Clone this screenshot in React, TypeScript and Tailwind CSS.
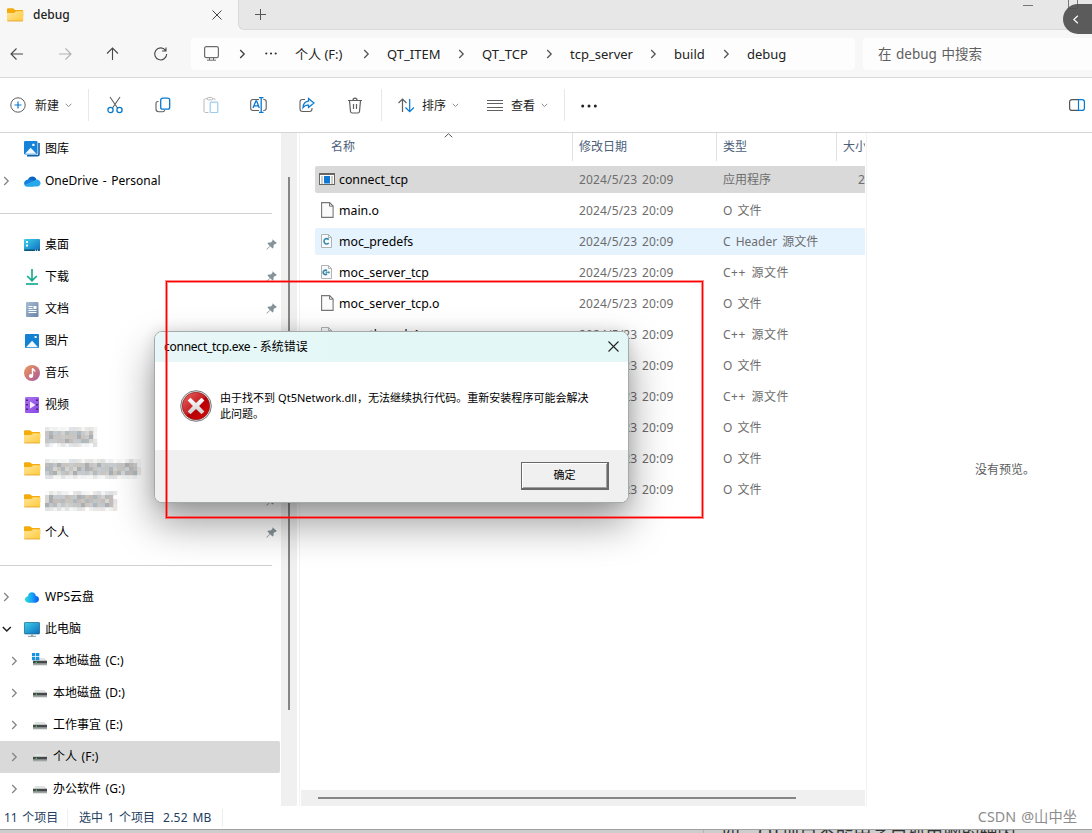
import type { ReactNode } from "react";

interface SideItem {
  label?: string;
  icon: ReactNode;
  chevron?: "right" | "down";
  pinned?: boolean;
  nested?: boolean;
  selected?: boolean;
  mosaic?: number;
}

interface FileItem {
  name: string;
  kind: "exe" | "file" | "c" | "cpp";
  type: string;
  size?: string;
}

const files: FileItem[] = [
  { name: "connect_tcp", kind: "exe", type: "应用程序", size: "2" },
  { name: "main.o", kind: "file", type: "O 文件" },
  { name: "moc_predefs", kind: "c", type: "C Header 源文件" },
  { name: "moc_server_tcp", kind: "cpp", type: "C++ 源文件" },
  { name: "moc_server_tcp.o", kind: "file", type: "O 文件" },
  { name: "moc_thread_1", kind: "cpp", type: "C++ 源文件" },
  { name: "moc_thread_1.o", kind: "file", type: "O 文件" },
  { name: "qrc_resource", kind: "cpp", type: "C++ 源文件" },
  { name: "qrc_resource.o", kind: "file", type: "O 文件" },
  { name: "server_tcp.o", kind: "file", type: "O 文件" },
  { name: "thread_1.o", kind: "file", type: "O 文件" },
];

function Chevron({ className = "" }: { className?: string }) {
  return (
    <svg width="7" height="10" viewBox="0 0 7 10" fill="none" stroke="currentColor" strokeWidth="1.3" className={className}>
      <path d="M1.2 1 5.2 5 1.2 9" />
    </svg>
  );
}

function SmallDown() {
  return (
    <svg width="7" height="5" viewBox="0 0 7 5" fill="none" stroke="#8a8a8a">
      <path d="M.7.8 3.5 3.6 6.3.8" />
    </svg>
  );
}

function Folder() {
  return (
    <svg width="17" height="14" viewBox="0 0 17 14">
      <defs>
        <linearGradient id="folder" x1="0" y1="0" x2="1" y2="1">
          <stop offset="0" stopColor="#ffe59a" />
          <stop offset="1" stopColor="#ffcb3d" />
        </linearGradient>
      </defs>
      <path d="M0 1.6C0 .8.6.3 1.300.3h4.400c.5 0 .8.2 1.100.5L8 2h7c.7 0 1.200.5 1.200 1.200V8H0z" fill="#f3ac0c" />
      <path d="M0 4.900h6.600c.5 0 .8-.2 1.200-.5L9 3.200h6c.7 0 1.200.4 1.200 1.100v7.800c0 .7-.5 1.200-1.200 1.200H1.200C.5 13.300 0 12.800 0 12.100z" fill="url(#folder)" />
      <path d="M.3 12.900h15.600" stroke="#e9a83a" strokeWidth=".9" />
    </svg>
  );
}

function Gallery() {
  return (
    <svg width="16" height="16" viewBox="0 0 16 16">
      <path d="M3 14.800h10.300c1 0 1.700-.7 1.700-1.700V2" fill="none" stroke="#0f5fa8" strokeWidth="1.600" />
      <rect width="13.500" height="13.500" rx="1.300" fill="#1583d8" />
      <path d="m1 12.700 5.600-6 5.900 6z" fill="#f3f9ff" />
      <rect x="8.300" y="2.800" width="2.200" height="2.200" fill="#fff" />
    </svg>
  );
}

function OneDrive() {
  return (
    <svg width="17" height="11" viewBox="0 0 17 11">
      <path d="M4 3.600C5.500-.7 11.400-.6 12.500 3.700L8 7z" fill="#0b64c0" />
      <path d="M4 3.500c-5 .6-5.200 6.600-.7 7h6L10 5C8 3.500 6 3.200 4 3.500z" fill="#1480da" />
      <path d="M12.500 3.600c4.900 0 5.400 6.500 1 6.900H3.300C2 10.500 1 9.800.5 8.900z" fill="#28a8ea" />
    </svg>
  );
}

function Desktop() {
  return (
    <svg width="16" height="12" viewBox="0 0 16 12">
      <defs>
        <linearGradient id="desk" x1="0" y1="0" x2="1" y2="1">
          <stop offset="0" stopColor="#3cd0e8" />
          <stop offset="1" stopColor="#0f6cc0" />
        </linearGradient>
      </defs>
      <rect width="16" height="12" rx="1" fill="url(#desk)" />
      <path d="M0 10.500h16V11l-1 1H1l-1-1z" fill="#0b5577" />
      <path d="M2 2h2v2H2zM2 5.500h2v2H2zM11 10.700h1v1h-1zM13 10.700h1v1h-1z" fill="#e9faff" />
    </svg>
  );
}

function Download() {
  return (
    <svg width="14" height="16" viewBox="0 0 14 16" fill="none" stroke="#19aa91" strokeWidth="1.700">
      <path d="M7 0v11.500M2.200 7 7 11.700 11.800 7" />
      <path d="M1 15h12" />
    </svg>
  );
}

function Document() {
  return (
    <svg width="13" height="15" viewBox="0 0 13 15">
      <defs>
        <linearGradient id="doc" x1="0" y1="0" x2="1" y2="1">
          <stop offset="0" stopColor="#a9bfd6" />
          <stop offset="1" stopColor="#6883a5" />
        </linearGradient>
      </defs>
      <rect width="12.500" height="15" rx="1" fill="url(#doc)" />
      <path d="M2.500 4.500h4M2.500 6.500h4M2.500 8.500h8M2.500 10.500h8" stroke="#fff" />
      <path d="M7.500 4h3v3h-3z" fill="#fff" />
    </svg>
  );
}

function Picture() {
  return (
    <svg width="14" height="14" viewBox="0 0 14 14">
      <rect width="14" height="14" rx="1" fill="#1482d2" />
      <path d="m1 13.300 6.100-6.600 5.900 6.600z" fill="#f3f9ff" />
      <rect x="9.600" y="2" width="2" height="2" fill="#fff" />
    </svg>
  );
}

function Music() {
  return (
    <svg width="16" height="16" viewBox="0 0 16 16">
      <defs>
        <linearGradient id="music" x1="0" y1="0" x2="1" y2="1">
          <stop offset="0" stopColor="#f09a55" />
          <stop offset="1" stopColor="#a655a0" />
        </linearGradient>
      </defs>
      <circle cx="8" cy="8" r="8" fill="url(#music)" />
      <ellipse cx="7" cy="11" rx="2.200" ry="2" fill="#fff" />
      <path d="M8.500 11V3.300c.4 1.500 2.400 1.500 2.400 3.200" fill="none" stroke="#fff" strokeWidth="1.400" />
    </svg>
  );
}

function Video() {
  return (
    <svg width="14" height="16" viewBox="0 0 14 16">
      <defs>
        <linearGradient id="video" x1="0" y1="0" x2="1" y2="1">
          <stop offset="0" stopColor="#a873ee" />
          <stop offset="1" stopColor="#8a48e4" />
        </linearGradient>
      </defs>
      <rect width="14" height="16" rx="1" fill="url(#video)" />
      <path d="M2 2.500v12M12 2.500v12" stroke="#3b1c6e" strokeWidth="1.700" strokeDasharray="1.600 2.900" />
      <path d="m5 4.500 5.500 3.500L5 11.500z" fill="#f5edff" />
    </svg>
  );
}

function WpsCloud() {
  return (
    <svg width="14" height="11" viewBox="0 0 14 11">
      <defs>
        <linearGradient id="wps" x1="0" y1="0" x2="1" y2="0">
          <stop offset="0" stopColor="#2be0c8" />
          <stop offset=".5" stopColor="#17a2fb" />
          <stop offset="1" stopColor="#0b54e8" />
        </linearGradient>
      </defs>
      <path d="M3 4.200C3-1 10.500-1 10.800 4c4.300.3 4.100 6.500-.2 6.700H3.700C-.8 10.700-1.400 4.900 3 4.200z" fill="url(#wps)" />
    </svg>
  );
}

function Computer() {
  return (
    <svg width="16" height="15" viewBox="0 0 16 15">
      <rect x=".4" y=".4" width="15.200" height="11.500" rx=".8" fill="url(#desk)" stroke="#176a8e" strokeWidth=".8" />
      <path d="M7 12.200h2v2H7z" fill="#9aa9b5" />
      <path d="M4 14.300h8" stroke="#8495a3" />
    </svg>
  );
}

function Drive({ system = false }: { system?: boolean }) {
  return (
    <svg width="16" height="16" viewBox="0 0 16 16">
      <path d="M3.500 5h9L15 8H1z" fill="#e0e2e4" />
      <rect x="1" y="7.800" width="14" height="2.900" fill="#444849" />
      <path d="M1 10.600h14v1.700H1z" fill="#a2a5a6" />
      <path d="M3.700 8.700h1.200v1.200H3.700z" fill="#24f04f" />
      {system && <path d="M0 0h3.300v3.300H0zM4 0h3.300v3.300H4zM0 4h3.300v3.300H0zM4 4h3.300v3.300H4z" fill="#1592df" />}
    </svg>
  );
}

function Pin() {
  return (
    <svg width="11" height="11" viewBox="0 0 11 11" className="mb-0.5 text-[#87939b]">
      <path d="M6.500.2 10.800 4 9.500 5 8.700 4.900 7.500 6.600l.1 2-1.100.9-2.300-2.300-2.900 3.100-.9.400.3-1 3-2.800L1.400 4.300l1.100-.9 2.200.1 1.700-1.600z" fill="currentColor" />
    </svg>
  );
}

const greys = ["#b6b4b3", "#c6c5c3", "#a6abae", "#bdc1c5", "#b6bec3", "#d0d0cd", "#a5a6a9", "#c0b8b5", "#abb5ba", "#cac4bd"];

function noise(n: number) {
  const v = Math.sin(n * 12.9898) * 43758.5453;
  return v - Math.floor(v);
}

// Pixelated stand-in for a hidden folder name
function Mosaic({ width, seed }: { width: number; seed: number }) {
  const cols = Math.floor(width / 4);
  return (
    <svg width={width + 4} height="20" viewBox={`0 0 ${width + 4} 20`} className="block">
      {Array.from({ length: cols * 5 }, (_, i) => {
        const col = i % cols;
        const row = Math.floor(i / cols);
        const n = noise(i + seed * 100);
        const edge = row === 0 || row === 4 || col === cols - 1;
        return (
          <rect
            key={i}
            x={col * 4}
            y={row * 4}
            width="4.200"
            height="4.200"
            fill={greys[Math.floor(n * greys.length)]}
            opacity={edge ? n * 0.45 : 0.75 + n * 0.25}
          />
        );
      })}
    </svg>
  );
}

const sideGroups: SideItem[][] = [
  [
    { label: "图库", icon: <Gallery /> },
    { label: "OneDrive - Personal", icon: <OneDrive />, chevron: "right" },
  ],
  [
    { label: "桌面", icon: <Desktop />, pinned: true },
    { label: "下载", icon: <Download />, pinned: true },
    { label: "文档", icon: <Document />, pinned: true },
    { label: "图片", icon: <Picture />, pinned: true },
    { label: "音乐", icon: <Music />, pinned: true },
    { label: "视频", icon: <Video />, pinned: true },
    { icon: <Folder />, mosaic: 54, pinned: true },
    { icon: <Folder />, mosaic: 96, pinned: true },
    { icon: <Folder />, mosaic: 74, pinned: true },
    { label: "个人", icon: <Folder />, pinned: true },
  ],
  [
    { label: "WPS云盘", icon: <WpsCloud />, chevron: "right" },
    { label: "此电脑", icon: <Computer />, chevron: "down" },
    { label: "本地磁盘 (C:)", icon: <Drive system />, chevron: "right", nested: true },
    { label: "本地磁盘 (D:)", icon: <Drive />, chevron: "right", nested: true },
    { label: "工作事宜 (E:)", icon: <Drive />, chevron: "right", nested: true },
    { label: "个人 (F:)", icon: <Drive />, chevron: "right", nested: true, selected: true },
    { label: "办公软件 (G:)", icon: <Drive />, chevron: "right", nested: true },
  ],
];

function SideRow({ item }: { item: SideItem }) {
  return (
    <div className={`flex h-8 w-[280px] shrink-0 items-center rounded-r-xs ${item.nested ? "pl-[11px]" : "pl-[3px]"} ${item.selected ? "bg-[#d9d9d9]" : ""}`}>
      <span className="flex w-5 items-center">
        {item.chevron === "right" && <Chevron className="text-[#858585]" />}
        {item.chevron === "down" && (
          <svg width="10" height="7" viewBox="0 0 10 7" fill="none" stroke="#222" strokeWidth="1.500" className="-ml-px">
            <path d="m.8 1 4 4 4-4" />
          </svg>
        )}
      </span>
      <span className="flex w-[18px] shrink-0 items-center justify-center">{item.icon}</span>
      <span className="ml-1 flex-1 text-[12px] whitespace-nowrap text-black [word-spacing:1.5px]">
        {item.mosaic ? <Mosaic width={item.mosaic} seed={item.mosaic % 7} /> : item.label}
      </span>
      {item.pinned && (
        <span className="mr-[3px]">
          <Pin />
        </span>
      )}
    </div>
  );
}

function Sidebar() {
  return (
    <aside className="flex w-[281px] shrink-0 flex-col overflow-hidden">
      {sideGroups.map((group, i) => (
        <div key={i} className="shrink-0">
          {i > 0 && (
            <div className="flex h-8 items-center">
              <div className="h-px w-[272px] bg-[#d0d0d0]" />
            </div>
          )}
          {group.map((item, j) => (
            <SideRow key={j} item={item} />
          ))}
        </div>
      ))}
    </aside>
  );
}

function FileIcon({ kind }: { kind: FileItem["kind"] }) {
  if (kind === "exe") {
    return (
      <svg width="16" height="12" viewBox="0 0 16 12">
        <rect x=".5" y=".5" width="15" height="11" fill="#fff" stroke="#68645f" />
        <path d="M0 0h16v2H0z" fill="#68645f" />
        <rect x="5" y="3" width="6" height="7.500" fill="#0f78d4" />
        <path d="M2 4h2M2 6h2M2 8h2M2 10h2M12 4h2M12 6h2M12 8h2M12 10h2" stroke="#87827d" strokeWidth=".8" />
      </svg>
    );
  }
  if (kind === "file") {
    return (
      <svg width="13" height="16" viewBox="0 0 13 16">
        <path d="M.6.600h8l3.500 3.500v11.300H.6z" fill="#fbfbfb" stroke="#777" strokeWidth="1.100" />
        <path d="M8.500.600v3.600h3.600" fill="none" stroke="#777" />
      </svg>
    );
  }
  return (
    <svg width="11" height="14" viewBox="0 0 11 14" className="-ml-px">
      <path d="M.5.500h7l3 3v10H.5z" fill="#f8fafb" stroke="#b0b3b4" />
      <path d="M7.500.500v3h3" fill="none" stroke="#b0b3b4" />
      {kind === "c" ? (
        <path d="M7.800 5.500C5.500 3.800 3 4.900 3 7.300s2.500 3.500 4.800 1.900" fill="none" stroke="#348cac" strokeWidth="1.600" />
      ) : (
        <>
          <path d="M6 5.700c-1.800-1.200-3.800-.1-3.800 1.700S4.300 10.200 6 9" fill="none" stroke="#3784a3" strokeWidth="1.700" />
          <path d="M4.500 7.400H9M5.700 6.200v2.400M7.800 6.200v2.400" stroke="#3784a3" strokeWidth=".8" />
        </>
      )}
    </svg>
  );
}

function FileRow({ file, index }: { file: FileItem; index: number }) {
  const bg = index === 0 ? "bg-[#d9d9d9]" : index === 2 ? "bg-[#e5f3ff]" : "";
  return (
    <div className={`mb-1 ml-[15px] flex h-[27px] items-center overflow-hidden rounded-l-xs text-[12px] whitespace-nowrap text-[#6d6d6d] ${bg}`}>
      <span className="flex w-6 shrink-0 items-center justify-center pb-0.5">
        <FileIcon kind={file.kind} />
      </span>
      <span className="w-[240px] shrink-0 pt-0.5 text-[12.300px] text-black">{file.name}</span>
      <span className="w-36 shrink-0 tracking-[0.15px] [word-spacing:1.500px]">2024/5/23 20:09</span>
      <span className={`w-[135px] shrink-0 [word-spacing:2px] ${file.type.startsWith("C++") ? "tracking-[0.5px]" : ""}`}>{file.type}</span>
      <span className="shrink-0">{file.size}</span>
    </div>
  );
}

function FileList() {
  return (
    <section className="flex w-[565px] shrink-0 flex-col overflow-hidden">
      <div className="relative flex h-7 shrink-0 items-center text-[12px] whitespace-nowrap text-[#4c607a]">
        <svg width="9" height="5" viewBox="0 0 9 5" fill="none" stroke="#555" className="absolute top-0 left-36">
          <path d="m.7 4.300 3.800-3.600 3.800 3.600" />
        </svg>
        <span className="flex h-full w-[273px] shrink-0 items-center border-r border-[#e2e2e2] pl-[31px]">名称</span>
        <span className="flex h-full w-36 shrink-0 items-center border-r border-[#e2e2e2] pl-1.5">修改日期</span>
        <span className="flex h-full w-[120px] shrink-0 items-center border-r border-[#e2e2e2] pl-1.5">类型</span>
        <span className="pl-1.5">大小</span>
      </div>
      <div className="mt-[5px] flex-1">
        {files.map((file, i) => (
          <FileRow key={file.name} file={file} index={i} />
        ))}
      </div>
      <div className="ml-px flex h-4 shrink-0 items-center bg-[#f0f0f0]">
        <div className="ml-[17px] h-0.5 w-[478px] bg-[#858585]" />
      </div>
    </section>
  );
}

function TitleBar() {
  return (
    <header className="flex h-[30px] bg-[#f7f7f7]">
      <div className="flex w-[238px] items-center pl-[7px]">
        <Folder />
        <span className="ml-[9px] text-[12px] font-medium text-[#222]">debug</span>
        <svg width="10" height="10" viewBox="0 0 10 10" stroke="#444" className="mr-4 mb-px ml-auto">
          <path d="m.5.500 9 9m0-9-9 9" />
        </svg>
      </div>
      <div className="flex flex-1 items-start rounded-bl-md border-b border-l border-[#d9d9d9] bg-[#e7e7e7]">
        <svg width="11" height="11" viewBox="0 0 11 11" stroke="#555" className="mt-[9px] ml-4">
          <path d="M5.500 0v11M0 5.500h11" />
        </svg>
        <span className="mt-[5px] mr-[35px] ml-auto h-px w-2.5 bg-[#777]" />
        <span className="mr-[14px] h-[9px] w-[10px] rounded-b-xs border border-t-0 border-[#777]" />
      </div>
    </header>
  );
}

const crumbs = [
  { label: "个人 (F:)", width: "w-[92px]" },
  { label: "QT_ITEM", width: "w-[95px]" },
  { label: "QT_TCP", width: "w-[88px]" },
  { label: "tcp_server", width: "w-[104px]" },
  { label: "build", width: "w-[73px]" },
];

function AddressBar() {
  return (
    <div className="flex h-[48px] items-center border-b border-[#dadada] bg-[#f7f7f7] text-[13px] text-[#222]">
      <svg width="191" height="16" viewBox="0 0 191 16" fill="none" stroke="#484848" strokeWidth="1.100" className="shrink-0">
        <path d="M23 8H11M16.500 2.500 11 8l5.500 5.500" />
        <path d="M59 8h12M65.500 2.500 71 8l-5.500 5.500" stroke="#b1b1b1" />
        <path d="M112.500 14V2M107 7.500l5.500-5.500 5.500 5.500" />
        <path d="M165.500 4.300A6 6 0 1 0 166.700 8M162 5h4V1.500" />
      </svg>
      <div className="flex h-8 w-[664px] shrink-0 items-center rounded bg-[#fdfdfd] pl-[13px]">
        <svg width="15" height="15" viewBox="0 0 15 15" fill="none" stroke="#6c6c6c">
          <rect x=".6" y=".6" width="13.800" height="11" rx="1.700" strokeWidth="1.200" />
          <path d="M5.500 12v2M9.500 12v2M3 14.200h9" />
        </svg>
        <Chevron className="ml-[20px] text-[#3d3d3d]" />
        <svg width="12" height="3" viewBox="0 0 12 3" fill="#333" className="mr-[18px] mb-px ml-[19px]">
          <circle cx="1.300" cy="1.500" r="1.100" />
          <circle cx="6" cy="1.500" r="1.100" />
          <circle cx="10.700" cy="1.500" r="1.100" />
        </svg>
        {crumbs.map((crumb) => (
          <span key={crumb.label} className={`flex shrink-0 items-center justify-between pr-[19px] whitespace-nowrap ${crumb.width}`}>
            <span className="pt-0.5">{crumb.label}</span>
            <Chevron className="-mr-[2px] shrink-0 text-[#555]" />
          </span>
        ))}
        <span className="pt-0.5">debug</span>
      </div>
      <div className="ml-2 flex h-8 flex-1 items-center rounded-l bg-[#fdfdfd] pt-0.5 pl-[15px] text-[13.500px] text-[#5f5f5f] [word-spacing:1px]">在 debug 中搜索</div>
    </div>
  );
}

function Toolbar() {
  return (
    <div className="flex h-[55px] shrink-0 items-center border-b border-[#d5d5d5] text-[12px] text-[#222]">
      <div className="flex h-8 w-[89px] items-center border-r border-[#e8e8e8] pl-2.5">
        <svg width="16" height="16" viewBox="0 0 16 16" fill="none" stroke="#606060">
          <circle cx="8" cy="8" r="7.200" />
          <path d="M8 4.500v7M4.500 8h7" stroke="#0879d1" strokeWidth="1.200" />
        </svg>
        <span className="mr-[6px] ml-[9px] pt-0.5">新建</span>
        <SmallDown />
      </div>
      <div className="flex h-8 w-[293px] items-center gap-8 border-r border-[#e8e8e8] pl-[18px] text-[#5f5f5f]">
        <svg width="16" height="18" viewBox="0 0 16 18" fill="none" stroke="currentColor" strokeWidth="1.100">
          <path d="m3 1 7.500 11M13 1 5.500 12" />
          <circle cx="3.500" cy="14" r="2.600" stroke="#0879d1" strokeWidth="1.300" />
          <circle cx="12.500" cy="14" r="2.600" stroke="#0879d1" strokeWidth="1.300" />
        </svg>
        <svg width="16" height="16" viewBox="0 0 16 16" fill="none" stroke="currentColor" strokeWidth="1.100">
          <path d="M3.500 4.500H3C1.800 4.500 1 5.300 1 6.500V12c0 1.700 1 2.700 2.700 2.700h4c1 0 1.800-.6 2.100-1.500" />
          <rect x="5.700" y="1.200" width="9" height="11" rx="2" stroke="#0879d1" strokeWidth="1.300" />
        </svg>
        <svg width="16" height="16" viewBox="0 0 16 16" fill="none" stroke="#b8b8b8">
          <path d="M4.500 1.700h-2C1.700 1.700 1 2.300 1 3.200V14c0 .9.600 1.500 1.500 1.500h3M9.500 1.700h1.300c.8 0 1.400.5 1.400 1.300" />
          <rect x="4.300" y=".6" width="5.400" height="2.300" rx="1" />
          <rect x="7.200" y="5.200" width="7.600" height="10.300" rx="1" stroke="#9bcdf0" strokeWidth="1.200" />
        </svg>
        <svg width="17" height="16" viewBox="0 0 17 16" fill="none" stroke="currentColor" strokeWidth="1.100" className="-ml-px">
          <path d="M9 2.500H3C1.700 2.500.7 3.300.7 4.700v6.600c0 1.400 1 2.200 2.300 2.200h6M13.300 2.500h.6c1.300 0 2.300.9 2.300 2.200v6.600c0 1.300-1 2.200-2.300 2.200h-.6" />
          <path d="M11.200.7v14.600M9 .7h4.500M9 15.300h4.500M3 11l2.900-7h.7l2.700 7M4.200 8.800h3.900" stroke="#0879d1" strokeWidth="1.300" />
        </svg>
        <svg width="16" height="16" viewBox="0 0 16 16" fill="none" stroke="currentColor" strokeWidth="1.100">
          <path d="M6 2.500H3.500C2 2.500 1 3.500 1 5v7c0 1.500 1 2.500 2.500 2.500h7C12 14.500 13 13.500 13 12v-1" />
          <path d="M9.500 1.500 15 6l-5.500 4.500V8.200C6.800 8 5.200 8.900 4 10.700c.2-4 2-6.300 5.500-6.600z" fill="#eaf5fd" stroke="#0879d1" strokeWidth="1.200" />
        </svg>
        <svg width="16" height="17" viewBox="0 0 16 17" fill="none" stroke="currentColor" strokeWidth="1.200">
          <path d="M1 3.500h14M2.500 3.500l1 11c.1.900.8 1.500 1.700 1.500h5.600c.9 0 1.600-.6 1.700-1.500l1-11M6 3.200C6 .3 10 .3 10 3.200M6.500 7v5M9.500 7v5" />
        </svg>
      </div>
      <div className="flex h-8 w-[183px] items-center border-r border-[#e8e8e8] pl-4">
        <svg width="17" height="15" viewBox="0 0 17 15" fill="none" strokeWidth="1.200">
          <path d="M4.500 14V1M.5 5l4-4 4 4" stroke="#606060" />
          <path d="M11.700 1v12.500M7.500 9.500l4.200 4.200 4.200-4.200" stroke="#0879d1" />
        </svg>
        <span className="mr-[6px] ml-[7px] pt-0.5">排序</span>
        <SmallDown />
        <svg width="16" height="11" viewBox="0 0 16 11" stroke="#606060" className="ml-[28px]">
          <path d="M0 .5h16M0 3.500h16M0 7.500h16M0 10.500h16" />
        </svg>
        <span className="mr-[6px] ml-2 pt-0.5">查看</span>
        <SmallDown />
      </div>
      <svg width="16" height="4" viewBox="0 0 16 4" fill="#222" className="mt-px ml-4">
        <circle cx="1.700" cy="2" r="1.500" />
        <circle cx="8" cy="2" r="1.500" />
        <circle cx="14.300" cy="2" r="1.500" />
      </svg>
      <svg width="16" height="12" viewBox="0 0 16 12" fill="none" strokeWidth="1.200" className="mr-[7px] ml-auto">
        <path d="M9.500.600H3C1.600.600.6 1.500.6 2.800v6.400c0 1.300 1 2.200 2.400 2.200h6.500" stroke="#555" />
        <path d="M9.500.600H13c1.400 0 2.400.9 2.400 2.200v6.400c0 1.300-1 2.200-2.400 2.200H9.500z" stroke="#0879d1" />
      </svg>
    </div>
  );
}

function ErrorDialog() {
  return (
    <div className="absolute top-[331px] left-[154px] flex h-[172px] w-[475px] flex-col overflow-hidden rounded-lg border border-[#a4a9a9] bg-white text-[12px] text-black shadow-[0_20px_40px_rgba(0,0,0,0.4),0_0_14px_rgba(0,0,0,0.12)]">
      <div className="flex h-[30px] shrink-0 items-center justify-between bg-gradient-to-r from-[#e9f6f8] to-[#e3f8f6] to-40% px-[9px]">
        <span>
          <span className="tracking-[-0.25px]">connect_tcp.exe - </span>系统错误
        </span>
        <svg width="11" height="11" viewBox="0 0 11 11" stroke="#222" strokeWidth="1.100" className="mb-0.5">
          <path d="m.5.500 10 10m0-10-10 10" />
        </svg>
      </div>
      <div className="flex flex-1 items-start pt-[27px] pl-[25px]">
        <svg width="32" height="34" viewBox="0 0 32 34" className="shrink-0">
          <defs>
            <linearGradient id="error" x1="0" y1="0" x2="1" y2="1">
              <stop offset="0" stopColor="#ed6a68" />
              <stop offset=".5" stopColor="#c51c20" />
              <stop offset=".52" stopColor="#b30006" />
              <stop offset="1" stopColor="#d90b0b" />
            </linearGradient>
            <linearGradient id="cross" x1="0" y1="0" x2="0" y2="1">
              <stop offset="0" stopColor="#fff" />
              <stop offset="1" stopColor="#ccc" />
            </linearGradient>
          </defs>
          <circle cx="16" cy="17" r="15.300" fill="#e8e8e8" stroke="#77797a" />
          <circle cx="16" cy="17" r="13.700" fill="url(#error)" stroke="#8c1b1b" strokeWidth=".7" />
          <path d="m10.500 8.700 5.500 5.300 5.500-5.300 2.900 2.900-5.300 5.400 5.300 5.400-2.900 2.900-5.500-5.300-5.500 5.300-2.900-2.900 5.300-5.400-5.300-5.400z" fill="url(#cross)" />
        </svg>
        <p className="mt-px ml-2 text-[11px] leading-4 tracking-[0.03px] whitespace-nowrap">
          由于找不到 Qt5Network.dll，无法继续执行代码。重新安装程序可能会解决
          <br />
          此问题。
        </p>
      </div>
      <div className="flex h-[52px] shrink-0 items-start justify-end bg-[#f0f0f0] pt-3 pr-[19px]">
        <button className="h-7 w-[88px] border border-r-2 border-b-2 border-[#696969] bg-[#f0f0f0] text-[11px] shadow-[inset_1px_1px_0_#fff,inset_-1px_-1px_0_#a0a0a0]">确定</button>
      </div>
    </div>
  );
}

export default function App() {
  return (
    <div className="relative flex h-[833px] w-[1092px] flex-col overflow-hidden bg-white font-['Noto_Sans','Noto_Sans_CJK_SC',sans-serif]">
      <TitleBar />
      <AddressBar />
      <Toolbar />
      <main className="flex h-[673px] shrink-0">
        <Sidebar />
        <div className="flex w-4 shrink-0 justify-center bg-[#f0f0f0] pt-11">
          <div className="h-[533px] w-0.5 bg-[#858585]" />
        </div>
        <div className="ml-0.5 w-px shrink-0 bg-[#f2f2f2]" />
        <FileList />
        <div className="ml-px flex flex-1 items-center justify-center border-l border-[#f2f2f2] pl-[51px] text-[12px] text-[#5c5c5c]">没有预览。</div>
      </main>
      <footer className="flex h-[23px] shrink-0 items-center text-[12px] whitespace-nowrap text-[#24405f] [word-spacing:1.500px]">
        <span className="ml-1 w-16 border-r border-[#efefef]">11 个项目</span>
        <span className="ml-[11px]">选中 1 个项目</span>
        <span className="ml-2 border-r border-[#efefef] pr-2.5 tracking-[0.2px]">2.52 MB</span>
        <span className="mr-[15px] mb-0.5 ml-auto text-[14.300px] leading-[20px] text-[#8d8d8d]">CSDN @山中坐</span>
      </footer>
      <div className="flex h-1 shrink-0 overflow-hidden border-t border-[#a0a0a0] bg-[#cdcdcd]">
        <div className="h-full w-[704px] border-r border-[#b5b5b5]" />
        <span className="-mt-2 ml-[18px] text-[18px] leading-[20px] whitespace-nowrap text-[#333]">四、QT项目不能由学自抓电脑的辅因</span>
      </div>

      <ErrorDialog />
      {/* Red highlight frame: solid core with a soft line on either side */}
      <div className="absolute top-[281px] left-[166px] h-[237px] w-[537px] border border-[#ff0000] shadow-[0_0_0_1px_rgba(255,30,30,0.5),inset_0_0_0_1px_rgba(255,30,30,0.5)]" />
      <div className="absolute top-1 left-[1063px] flex h-[30px] w-[29px] items-center rounded-l-full bg-[#4b4b4b]/90 pl-2.5">
        <svg width="6" height="9" viewBox="0 0 6 9" fill="none" stroke="#fff" strokeWidth="1.200">
          <path d="m4.800.700-4 3.800 4 3.800" />
        </svg>
      </div>
    </div>
  );
}
